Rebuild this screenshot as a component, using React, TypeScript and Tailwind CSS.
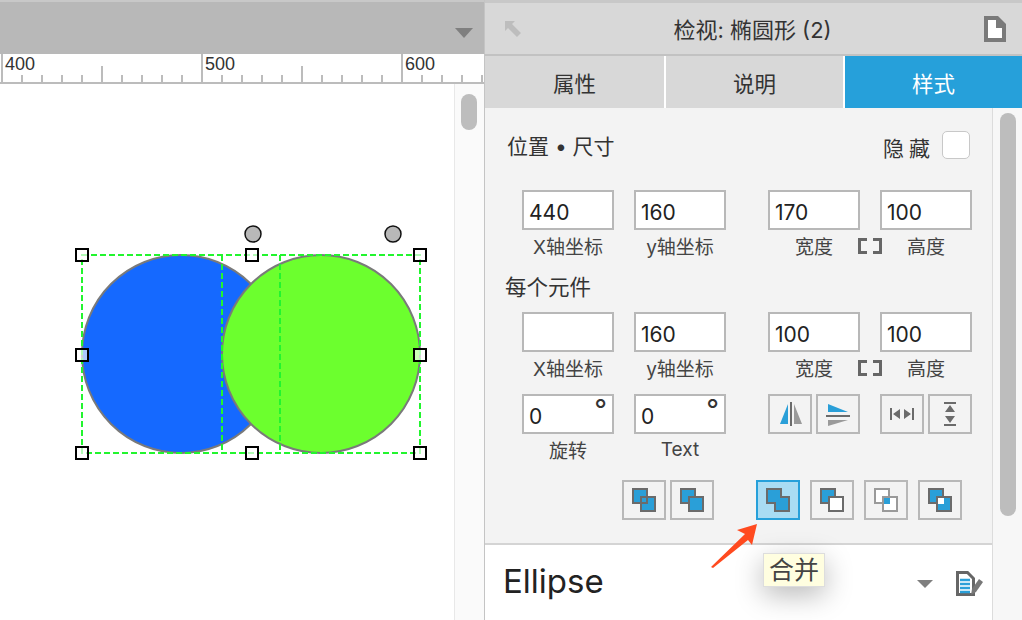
import React from 'react';

const SANS = 'font-["Inter","Noto_Sans_CJK_SC",sans-serif]';

const Box = ({ value, degree }: { value?: string; degree?: boolean }) => (
  <div className="relative w-[92px] h-10 border-2 border-[#b8b8b8] bg-white pl-[5px] text-[21px] leading-[41px] text-[#222]">
    {value}
    {degree && <span className="absolute right-[5px] top-[-1px] text-[28px] leading-[30px] text-[#333]">°</span>}
  </div>
);

const Field = ({ value, label, degree, labelClass = '' }: { value?: string; label: string; degree?: boolean; labelClass?: string }) => (
  <div className="flex flex-col w-[92px]">
    <Box value={value} degree={degree} />
    <div className={`mt-[6px] h-6 text-center text-[19px] leading-6 text-[#444] whitespace-nowrap ${labelClass}`}>{label}</div>
  </div>
);

const LinkIcon = () => (
  <div className="w-5 h-10 flex justify-center items-start shrink-0 relative">
    <svg width="24" height="16" viewBox="0 0 24 16" className="absolute top-[48px] left-[-2px]" fill="none" stroke="#666" strokeWidth="3">
      <path d="M9 1.5H1.5v13H9" />
      <path d="M15 1.5h7.500v13H15" />
    </svg>
  </div>
);

const SizeRow = ({ a, b, c, d }: { a?: string; b: string; c: string; d: string }) => (
  <div className="flex ml-[37px]">
    <Field value={a} label="X轴坐标" />
    <div className="w-5" />
    <Field value={b} label="y轴坐标" />
    <div className="w-[42px]" />
    <Field value={c} label="宽度" />
    <LinkIcon />
    <Field value={d} label="高度" />
  </div>
);

const IconButton = ({ children, active }: { children: React.ReactNode; active?: boolean }) => (
  <div className={`w-11 h-10 border-2 ${active ? 'border-[#26a0da] bg-[#a9dcf3]' : 'border-[#b8b8b8]'}`}>
    <svg width="40" height="36" viewBox="2 2 40 36" className="block">
      {children}
    </svg>
  </div>
);

const BLUE = '#2a9fd8';
const DARK = '#6b6b6b';
const LIGHT = '#9a9a9a';

const Sq = ({ x, y, fill, stroke = DARK }: { x: number; y: number; fill: string; stroke?: string }) => (
  <rect x={x + 1} y={y + 1} width="14" height="14" fill={fill} stroke={stroke} strokeWidth="2" />
);

const Inspector = () => (
  <div className="flex-1 flex flex-col border-l border-[#c4c4c4] bg-[#f3f3f3]">
    <div className="h-[3px] bg-[#c8c8c8]" />
    <div className="h-[53px] bg-[#d8d8d8] border-b-2 border-[#c2c2c2] flex items-center px-5">
      <svg width="16" height="16" viewBox="0 0 16 16" fill="#bdbdbd" className="shrink-0">
        <path d="M0 0h10L7 3l9 9-4 4-9-9-3 3z" />
      </svg>
      <div className="flex-1 text-center text-[22px] text-[#333] mt-[3px]">检视: 椭圆形 (2)</div>
      <svg width="22" height="26" viewBox="0 0 22 26" className="shrink-0 -mr-[4px]">
        <path d="M0 0h14l8 8v18H0z" fill="#7a7a7a" />
        <path d="M4 4h8v8h6v10H4z" fill="#fff" />
      </svg>
    </div>
    <div className="flex h-[52px] bg-white gap-[2px] text-[21.5px] leading-[56px] text-center">
      <div className="w-[179px] bg-[#d8d8d8] text-[#333]">属性</div>
      <div className="w-[177px] bg-[#d8d8d8] text-[#333]">说明</div>
      <div className="flex-1 bg-[#26a0da] text-white">样式</div>
    </div>
    <div className="flex-1 flex min-h-0">
      <div className="w-[507px] flex flex-col">
        <div className="flex-1">
          <div className="flex justify-between items-center h-[30px] mt-[24px] pl-[22px] pr-[22px] text-[#333]">
            <span className="text-[21px]">位置 • 尺寸</span>
            <div className="flex items-center">
              <span className="text-[21px] tracking-[5px] mt-[4px]">隐藏</span>
              <div className="ml-[7px] -mt-[5px] w-[28px] h-[28px] rounded-[5px] border border-[#c8c8c8] bg-white" />
            </div>
          </div>
          <div className="mt-[28px]">
            <SizeRow a="440" b="160" c="170" d="100" />
          </div>
          <div className="mt-[15px] mb-[13px] ml-5 h-6 text-[21.5px] leading-6 text-[#333]">每个元件</div>
          <SizeRow b="160" c="100" d="100" />
          <div className="flex ml-[37px] mt-[12px]">
            <Field value="0" label="旋转" degree />
            <div className="w-5" />
            <Field value="0" label="Text" degree labelClass="-translate-y-[2px]" />
            <div className="w-[42px]" />
            <div className="flex gap-1 h-10">
              <IconButton>
                <path d="M12 30 20 10v20z" fill={BLUE} />
                <path d="M26 10l8 20h-8z" fill={LIGHT} />
                <path d="M23 8v24" stroke={DARK} strokeWidth="2" />
              </IconButton>
              <IconButton>
                <path d="M12 10l20 8H12z" fill={BLUE} />
                <path d="M12 26h20l-20 6z" fill={LIGHT} />
                <path d="M10 22h24" stroke={DARK} strokeWidth="2" />
              </IconButton>
            </div>
            <div className="w-5" />
            <div className="flex gap-1 h-10">
              <IconButton>
                <path d="M11 14v12M33 14v12" stroke={DARK} strokeWidth="2" />
                <path d="M13 20l7-5v10zM31 20l-7-5v10z" fill={DARK} />
              </IconButton>
              <IconButton>
                <path d="M16 9h12M16 31h12" stroke={DARK} strokeWidth="2" />
                <path d="M22 11l-5 7h10zM22 29l-5-7h10z" fill={DARK} />
              </IconButton>
            </div>
          </div>
          <div className="flex ml-[137px] mt-[16px]">
            <div className="flex gap-1">
              <IconButton>
                <Sq x={10} y={8} fill={BLUE} />
                <Sq x={18} y={16} fill={BLUE} />
                <rect x="19" y="17" width="6" height="6" fill={BLUE} stroke={DARK} strokeWidth="2" />
              </IconButton>
              <IconButton>
                <Sq x={10} y={8} fill={BLUE} />
                <Sq x={18} y={16} fill={BLUE} />
              </IconButton>
            </div>
            <div className="w-[42px]" />
            <div className="flex gap-[10px]">
              <IconButton active>
                <path d="M11 9h14v8h8v14H19v-8h-8z" fill={BLUE} stroke={DARK} strokeWidth="2" />
              </IconButton>
              <IconButton>
                <Sq x={10} y={8} fill={BLUE} />
                <Sq x={18} y={16} fill="#fff" />
              </IconButton>
              <IconButton>
                <Sq x={10} y={8} fill="#fff" stroke={LIGHT} />
                <Sq x={18} y={16} fill="#fff" stroke={LIGHT} />
                <rect x="20" y="18" width="6" height="6" fill={BLUE} />
              </IconButton>
              <IconButton>
                <Sq x={10} y={8} fill={BLUE} />
                <Sq x={18} y={16} fill={BLUE} />
                <rect x="20" y="18" width="6" height="6" fill="#fff" />
              </IconButton>
            </div>
          </div>
        </div>
        <div className="relative h-[77px] border-t-2 border-[#d4d4d4] bg-white flex items-center pl-[18px]">
          <span className="text-[33px] text-[#222] -mt-[2px]">Ellipse</span>
          <svg width="16" height="8" viewBox="0 0 16 8" className="ml-[313px] mt-[3px]" fill="#7f7f7f">
            <path d="M0 0h16L8 8z" />
          </svg>
          <svg width="28" height="25" viewBox="0 0 28 25" className="ml-[23px] mt-[1px]">
            <path d="M1.500 1.500h10l6 6v16h-16z" fill="#fff" stroke="#666" strokeWidth="3" />
            <path d="M4 9h10M4 13h10M4 17h10M4 21h10" stroke={BLUE} strokeWidth="2.500" />
            <path d="M15 24l1-6 7-10 4 3-7 10z" fill="#777" />
          </svg>
          <div className="absolute left-[278px] top-[8px] w-[62px] h-[34px] bg-[#fffee0] border border-[#ddd] text-center text-[25px] leading-[32px] text-[#444] shadow-[0_8px_28px_rgba(0,0,0,0.28)]">
            合并
          </div>
        </div>
      </div>
      <div className="flex-1 border-l border-[#dcdcdc] bg-[#f7f7f7] pl-[7px] pt-[5px]">
        <div className="w-4 h-[403px] rounded-lg bg-[#bdbdbd]" />
      </div>
    </div>
    <svg width="50" height="48" viewBox="0 0 50 48" className="absolute left-[709px] top-[522px]">
      <path d="M48 2 28 8l8 4L2 45l2 1 35-28 4 5z" fill="#ff4a1f" />
    </svg>
  </div>
);

const RulerTicks = () => {
  const ticks: React.ReactNode[] = [];
  for (let x = 2, i = 0; x < 484; x += 20, i++) {
    const top = i % 10 === 0 ? 0 : i % 5 === 0 ? 12 : 21;
    ticks.push(<line key={x} x1={x} x2={x} y1={top} y2={29} stroke="#bcbcbc" strokeWidth="2" />);
  }
  return (
    <svg width="484" height="29" className="absolute left-0 top-0">
      {ticks}
    </svg>
  );
};

const Handle = ({ x, y }: { x: number; y: number }) => (
  <rect x={x - 6} y={y - 6} width="12" height="12" fill="#fff" fillOpacity="0.65" stroke="#000" strokeWidth="2" />
);

const Canvas = () => (
  <div className="flex-1 flex flex-col min-w-0">
    <div className="h-[2px] bg-[#c8c8c8]" />
    <div className="h-[52px] bg-[#b8b8b8] flex items-center justify-end pr-[11px]">
      <svg width="18" height="10" viewBox="0 0 18 10" fill="#7f7f7f" className="mt-[10px]">
        <path d="M0 0h18L9 10z" />
      </svg>
    </div>
    <div className="relative h-[30px] bg-white border-b-2 border-[#bcbcbc] flex overflow-hidden font-['Liberation_Sans',sans-serif] text-[18px] leading-[20px] text-[#333]">
      <RulerTicks />
      {['400', '500', '600'].map((n) => (
        <div key={n} className="relative w-[200px] shrink-0 pl-[5px]">
          {n}
        </div>
      ))}
    </div>
    <div className="flex-1 flex bg-white">
      <div className="relative flex-1">
        <svg width="454" height="536" viewBox="0 84 454 536" className="absolute left-0 top-0">
          <circle cx="181" cy="354" r="99" fill="#1569ff" stroke="#7a7a7a" strokeWidth="2" />
          <circle cx="321" cy="354" r="99" fill="#6cff2e" stroke="#7a7a7a" strokeWidth="2" />
          <g fill="none" stroke="#22f52e" strokeWidth="2" strokeDasharray="6 3">
            <rect x="82" y="255" width="338" height="198" />
            <path d="M222 255v198M280 255v198" />
          </g>
          {[82, 252, 420].map((x) => (
            <React.Fragment key={x}>
              <Handle x={x} y={255} />
              <Handle x={x} y={453} />
            </React.Fragment>
          ))}
          <Handle x={82} y={355} />
          <Handle x={420} y={355} />
          <circle cx="253" cy="234" r="8" fill="#b8b8b8" stroke="#111" strokeWidth="1.500" />
          <circle cx="393" cy="234" r="8" fill="#b8b8b8" stroke="#111" strokeWidth="1.500" />
        </svg>
      </div>
      <div className="w-[30px] border-l border-[#e8e8e8] bg-[#fafafa] pl-[6px] pt-[10px]">
        <div className="w-4 h-9 rounded-lg bg-[#bdbdbd]" />
      </div>
    </div>
  </div>
);

export default function App() {
  return (
    <div className={`relative w-[1022px] h-[620px] flex overflow-hidden ${SANS}`}>
      <div className="w-[484px] flex">
        <Canvas />
      </div>
      <Inspector />
    </div>
  );
}
